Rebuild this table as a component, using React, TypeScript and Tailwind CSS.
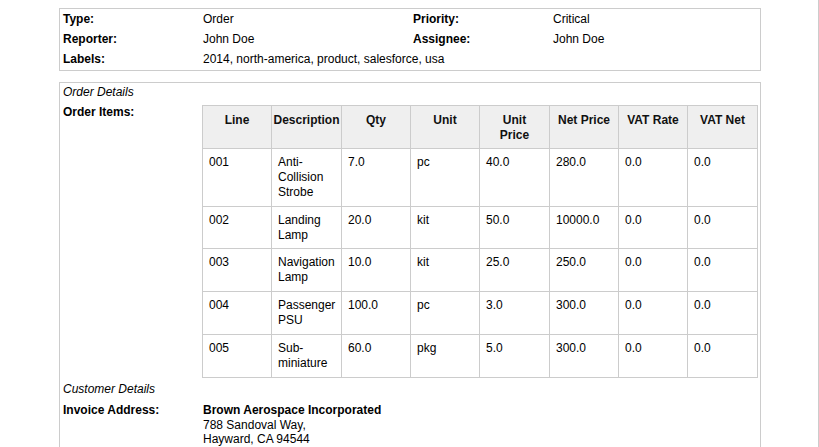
import React from "react";

const cols = [
  { h: "Line", w: 69 },
  { h: "Description", w: 70 },
  { h: "Qty", w: 69 },
  { h: "Unit", w: 69 },
  { h: "Unit Price", w: 70 },
  { h: "Net Price", w: 69 },
  { h: "VAT Rate", w: 69 },
  { h: "VAT Net", w: 70 },
];

const rows = [
  ["001", "Anti-Collision Strobe", "7.0", "pc", "40.0", "280.0", "0.0", "0.0"],
  ["002", "Landing Lamp", "20.0", "kit", "50.0", "10000.0", "0.0", "0.0"],
  ["003", "Navigation Lamp", "10.0", "kit", "25.0", "250.0", "0.0", "0.0"],
  ["004", "Passenger PSU", "100.0", "pc", "3.0", "300.0", "0.0", "0.0"],
  ["005", "Sub-miniature", "60.0", "pkg", "5.0", "300.0", "0.0", "0.0"],
];

export default function App() {
  return (
    <div className="w-[819px] h-[447px] overflow-hidden border-r border-[#cccccc] bg-white font-['Liberation_Sans',Arial,sans-serif] text-[12px] text-black">
      <div className="pt-[8px] pl-[59px]">
        {/* Summary box */}
        <div className="w-[702px] border border-[#cccccc] pb-[1px]">
          <table className="w-[700px] table-fixed border-collapse">
            <colgroup>
              <col className="w-[140px]" />
              <col className="w-[210px]" />
              <col className="w-[140px]" />
              <col className="w-[210px]" />
            </colgroup>
            <tbody>
              <tr>
                <td className="px-[3px] py-[3px] leading-[14px] font-bold">Type:</td>
                <td className="px-[3px] py-[3px] leading-[14px]">Order</td>
                <td className="px-[3px] py-[3px] leading-[14px] font-bold">Priority:</td>
                <td className="px-[3px] py-[3px] leading-[14px]">Critical</td>
              </tr>
              <tr>
                <td className="px-[3px] py-[3px] leading-[14px] font-bold">Reporter:</td>
                <td className="px-[3px] py-[3px] leading-[14px]">John Doe</td>
                <td className="px-[3px] py-[3px] leading-[14px] font-bold">Assignee:</td>
                <td className="px-[3px] py-[3px] leading-[14px]">John Doe</td>
              </tr>
              <tr>
                <td className="px-[3px] py-[3px] leading-[14px] font-bold">Labels:</td>
                <td colSpan={3} className="px-[3px] py-[3px] leading-[14px]">
                  2014, north-america, product, salesforce, usa
                </td>
              </tr>
            </tbody>
          </table>
        </div>

        {/* Details box */}
        <div className="mt-[11px] w-[702px] h-[400px] border border-[#cccccc]">
          <table className="w-[700px] table-fixed border-collapse">
            <colgroup>
              <col className="w-[140px]" />
              <col className="w-[560px]" />
            </colgroup>
            <tbody>
              <tr>
                <td colSpan={2} className="px-[3px] pt-[2px] pb-[2px] leading-[14px] italic">
                  Order Details
                </td>
              </tr>
              <tr>
                <td className="px-[3px] pt-[4px] leading-[14px] font-bold align-top">Order Items:</td>
                <td className="pl-[2px] pr-[1px] pt-[4px] pb-[1px] align-top">
                  <table className="w-[556px] table-fixed border-collapse border border-[#cccccc]">
                    <colgroup>
                      {cols.map((c, i) => (
                        <col key={i} style={{ width: c.w }} />
                      ))}
                    </colgroup>
                    <thead>
                      <tr className="bg-[#efefef]">
                        {cols.map((c, i) => (
                          <th
                            key={i}
                            className={`border border-[#cccccc] pt-[7px] pb-[5px] leading-[15px] font-bold text-center align-top text-[#111] ${
                              i === 1 ? "px-0" : "px-[6px]"
                            }`}
                          >
                            {c.h === "Unit Price" ? (
                              <>
                                Unit
                                <br />
                                Price
                              </>
                            ) : (
                              c.h
                            )}
                          </th>
                        ))}
                      </tr>
                    </thead>
                    <tbody>
                      {rows.map((r, ri) => (
                        <tr key={ri}>
                          {r.map((v, ci) => (
                            <td
                              key={ci}
                              className={`border border-[#cccccc] px-[6px] pt-[6px] leading-[15px] align-top ${
                                ri === 1 ? "pb-[5px]" : "pb-[6px]"
                              }`}
                            >
                              {v}
                            </td>
                          ))}
                        </tr>
                      ))}
                    </tbody>
                  </table>
                </td>
              </tr>
              <tr>
                <td colSpan={2} className="px-[3px] pt-[3px] pb-[2px] leading-[14px] italic">
                  Customer Details
                </td>
              </tr>
              <tr>
                <td className="px-[3px] pt-[5px] leading-[14.5px] font-bold align-top">Invoice Address:</td>
                <td className="px-[3px] pt-[5px] leading-[14.5px] align-top">
                  <div className="font-bold">Brown Aerospace Incorporated</div>
                  <div>788 Sandoval Way,</div>
                  <div>Hayward, CA 94544</div>
                </td>
              </tr>
            </tbody>
          </table>
        </div>
      </div>
    </div>
  );
}
